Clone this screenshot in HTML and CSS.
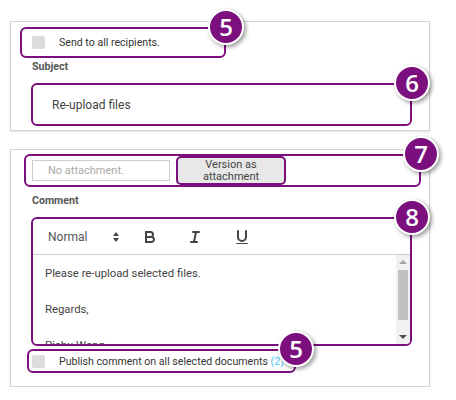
FILE: index.html
```html
<!DOCTYPE html>
<html lang="en">
<head>
  <meta charset="UTF-8">
  <title>Send request</title>
  <link rel="stylesheet" href="styles.css">
</head>
<body>
  <!-- Recipients and subject -->
  <div class="panel panel-top">
    <div class="hl send-row">
      <span class="check"></span>
      <span class="check-text">Send to all recipients.</span>
      <span class="badge">5</span>
    </div>
    <div class="label">Subject</div>
    <div class="hl subject-box">
      Re-upload files
      <span class="badge">6</span>
    </div>
  </div>

  <!-- Attachment and comment -->
  <div class="panel panel-bottom">
    <div class="hl att-row">
      <input class="att-input" type="text" placeholder="No attachment.">
      <button class="hl att-btn">Version as<br>attachment</button>
      <span class="badge">7</span>
    </div>
    <div class="label">Comment</div>
    <div class="hl editor">
      <div class="toolbar">
        <span class="picker">Normal</span>
        <svg class="picker-arrows" width="6" height="10" viewBox="0 0 6 10">
          <polygon points="0,4 3,0 6,4" />
          <polygon points="0,6 3,10 6,6" />
        </svg>
        <svg class="tool tool-bold" width="18" height="18" viewBox="0 0 18 18">
          <path d="M5,4H9.5A2.5,2.5,0,0,1,12,6.5v0A2.5,2.5,0,0,1,9.5,9H5V4Z" />
          <path d="M5,9h5.5A2.5,2.5,0,0,1,13,11.5v0A2.5,2.5,0,0,1,10.5,14H5V9Z" />
        </svg>
        <svg class="tool tool-italic" width="18" height="18" viewBox="0 0 18 18">
          <line x1="7" x2="13" y1="4" y2="4" />
          <line x1="5" x2="11" y1="14" y2="14" />
          <line x1="8" x2="10" y1="14" y2="4" />
        </svg>
        <svg class="tool tool-underline" width="18" height="18" viewBox="0 0 18 18">
          <path d="M5,3V9a4,4,0,0,0,4,4H9a4,4,0,0,0,4-4V3" />
          <rect class="fill" height="1" rx="0.5" width="12" x="3" y="15" />
        </svg>
      </div>
      <div class="editor-body">
        <div class="editor-text">
          <p>Please re-upload selected files.</p>
          <p><br></p>
          <p>Regards,</p>
          <p><br></p>
          <p>Pichu Wang</p>
        </div>
        <div class="scrollbar">
          <span class="arrow-up"></span>
          <span class="thumb"></span>
          <span class="arrow-down"></span>
        </div>
      </div>
      <span class="badge">8</span>
    </div>
    <div class="hl publish-row">
      <span class="check"></span>
      <span class="check-text">Publish comment on all selected documents <span class="count">(2)</span></span>
      <span class="badge">5</span>
    </div>
  </div>
</body>
</html>
```

FILE: styles.css
```css
/* General Styles */
body {
  margin: 0;
  font-family: Roboto, "Liberation Sans", sans-serif;
  color: #444;
  background-color: #fff;
}

.panel {
  box-sizing: border-box;
  width: 420px;
  margin-left: 10px;
  border: 1px solid #d4d4d4;
  box-shadow: 0 1px 2px rgba(0, 0, 0, 0.12);
}

.panel-top {
  margin-top: 21px;
  height: 110px;
  padding-top: 5px;
}

.panel-bottom {
  margin-top: 18px;
  height: 238px;
  padding-top: 4px;
}

/* Highlighted regions */
.hl {
  position: relative;
  box-sizing: border-box;
  border: 2px solid #7b0f7e;
  border-radius: 6px;
}

.badge {
  position: absolute;
  top: -2px;
  right: -2px;
  transform: translate(50%, -50%);
  width: 36px;
  height: 36px;
  box-sizing: border-box;
  border: 2px solid #fff;
  border-radius: 50%;
  background-color: #7b0f7e;
  box-shadow: 2px 2px 4px rgba(0, 0, 0, 0.4);
  color: #fff;
  font-family: "Open Sans", sans-serif;
  font-weight: 600;
  font-size: 24px;
  line-height: 32px;
  text-align: center;
  z-index: 2;
}

.check {
  width: 13px;
  height: 13px;
  border-radius: 2px;
  background-color: #dcdcdc;
  flex-shrink: 0;
}

.check-text {
  margin-left: 14px;
  font-size: 10.6px;
  color: #333;
  white-space: nowrap;
}

.send-row {
  display: flex;
  align-items: center;
  width: 206px;
  height: 31px;
  margin-left: 9px;
  padding-left: 10px;
}

.label {
  margin: 2px 0 0 21px;
  font-size: 10.6px;
  line-height: 14px;
  font-weight: bold;
  color: #555;
}

.subject-box {
  display: flex;
  align-items: center;
  width: 381px;
  height: 43px;
  margin: 9px 0 0 20px;
  padding-left: 19px;
  font-size: 12px;
}

/* Attachment */
.att-row {
  display: flex;
  align-items: center;
  width: 397px;
  height: 33px;
  margin-left: 13px;
  padding-left: 6px;
}

.att-input {
  box-sizing: border-box;
  width: 138px;
  height: 21px;
  border: 1px solid #ccc;
  padding: 0 0 0 15px;
  font-family: inherit;
  font-size: 11px;
  color: #444;
}

.att-input::placeholder {
  color: #aaa;
}

.att-btn {
  width: 110px;
  height: 29px;
  margin-left: 6px;
  padding: 0;
  border-radius: 5px;
  background-color: #e8e8e8;
  font-family: inherit;
  font-size: 11px;
  line-height: 12px;
  color: #444;
}

.panel-bottom .label {
  margin-top: 7px;
}

/* Editor */
.editor {
  width: 381px;
  height: 129px;
  margin: 9px 0 0 20px;
  display: flex;
  flex-direction: column;
}

.toolbar {
  display: flex;
  align-items: center;
  height: 35px;
  flex-shrink: 0;
  padding-left: 15px;
  border-bottom: 1px solid #ccc;
}

.picker {
  font-size: 12px;
  color: #555;
  width: 65px;
}

.picker-arrows {
  fill: #444;
}

.tool {
  fill: none;
  stroke: #444;
  stroke-width: 2;
  stroke-linecap: round;
}

.tool-bold {
  margin-left: 22px;
}

.tool-italic {
  margin-left: 27px;
}

.tool-underline {
  margin-left: 29px;
}

.tool .fill {
  fill: #444;
  stroke: none;
}

.editor-body {
  flex: 1;
  display: flex;
  overflow: hidden;
  border-bottom-right-radius: 4px;
}

.editor-text {
  flex: 1;
  padding: 10px 0 0 12px;
  font-size: 11.3px;
  line-height: 18px;
  color: #444;
}

.editor-text p {
  margin: 0;
}

.scrollbar {
  width: 14px;
  background-color: #f1f1f1;
  display: flex;
  flex-direction: column;
  align-items: center;
}

.arrow-up,
.arrow-down {
  width: 0;
  height: 0;
  border-left: 4px solid transparent;
  border-right: 4px solid transparent;
  margin: 5px 0;
}

.arrow-up {
  border-bottom: 4px solid #a3a3a3;
}

.arrow-down {
  border-top: 4px solid #505050;
  margin-top: auto;
}

.thumb {
  width: 10px;
  height: 50px;
  background-color: #c1c1c1;
  margin-top: 1px;
}

/* Publish */
.publish-row {
  display: flex;
  align-items: center;
  width: 269px;
  height: 24px;
  margin: 3px 0 0 16px;
  padding-left: 3px;
}

.count {
  color: #4fc3f7;
}
```
